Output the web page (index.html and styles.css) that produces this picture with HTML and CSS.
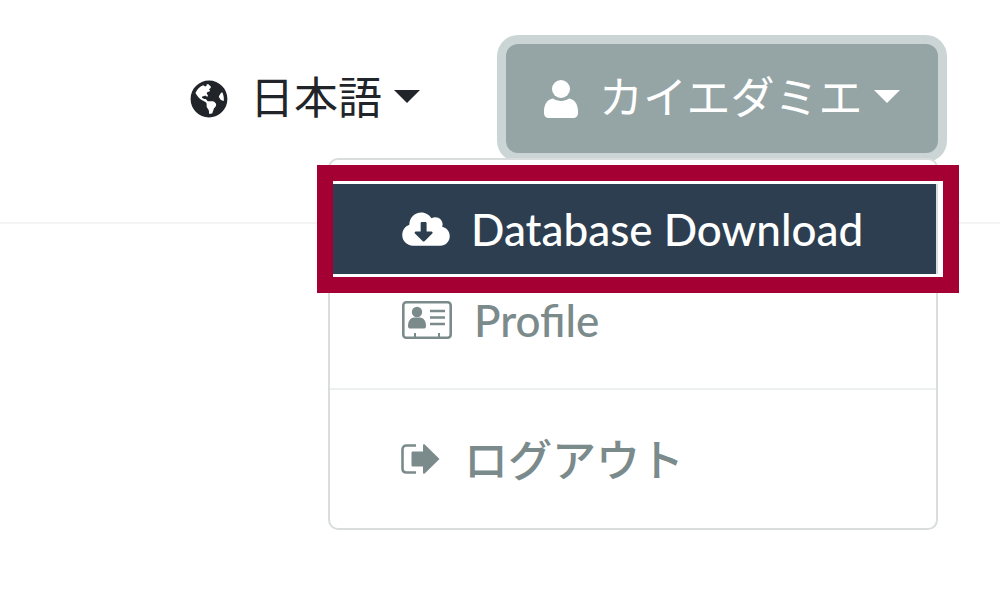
FILE: index.html
```html
<!DOCTYPE html>
<html lang="ja">
<head>
  <meta charset="UTF-8" />
  <title>Database Download</title>
  <link rel="stylesheet" href="styles.css">
</head>
<body>
  <header class="navbar">
    <a class="lang">
      <svg class="icon-globe" viewBox="0 0 496 512"><path d="M248 8C111.03 8 0 119.03 0 256s111.03 248 248 248 248-111.03 248-248S384.97 8 248 8zm82.29 357.6c-3.9 3.88-7.99 7.95-11.31 11.28-2.99 3-5.1 6.7-6.17 10.71-1.51 5.66-2.73 11.38-4.77 16.87l-17.39 46.85c-13.76 3-28 4.69-42.65 4.69v-27.38c1.69-12.62-7.64-36.26-22.63-51.25-6-6-9.37-14.14-9.37-22.63v-32.01c0-11.64-6.27-22.34-16.46-27.97-14.37-7.95-34.81-19.06-48.81-26.11-11.48-5.78-22.1-13.14-31.65-21.75l-.8-.72a114.792 114.792 0 0 1-18.06-20.74c-9.38-13.77-24.66-36.42-34.59-51.14 20.47-45.5 57.36-82.04 103.2-101.89l24.01 12.01C203.48 89.74 216 82.01 216 70.11v-11.3c7.99-1.29 16.12-2.11 24.39-2.42l28.3 28.3c6.25 6.25 6.25 16.38 0 22.63L264 112l-10.34 10.34c-3.12 3.12-3.12 8.19 0 11.31l4.69 4.69c3.12 3.12 3.12 8.19 0 11.31l-8 8a8.008 8.008 0 0 1-5.66 2.34h-8.99c-2.08 0-4.08.81-5.58 2.27l-9.92 9.65a8.008 8.008 0 0 0-1.58 9.31l15.59 31.19c2.66 5.32-1.21 11.58-7.15 11.58h-5.64c-1.93 0-3.79-.7-5.24-1.96l-9.28-8.06a16.017 16.017 0 0 0-15.55-3.1l-31.17 10.39a11.95 11.95 0 0 0-8.17 11.34c0 4.53 2.56 8.66 6.61 10.69l11.08 5.54c9.41 4.71 19.79 7.16 30.31 7.16s22.59 27.29 32 32h66.75c8.49 0 16.62 3.37 22.63 9.37l13.69 13.69a30.503 30.503 0 0 1 8.93 21.57 46.536 46.536 0 0 1-13.72 32.98zM417 274.25c-5.79-1.45-10.84-5-14.15-9.97l-17.98-26.97a23.97 23.97 0 0 1 0-26.62l19.59-29.38c2.32-3.47 5.5-6.28 9.24-8.14l12.98-6.49C440.2 193.59 448 223.87 448 256c0 8.67-.74 17.16-1.82 25.54L417 274.25z"/></svg>
      <span class="label">日本語</span>
      <i class="caret"></i>
    </a>
    <a class="user-btn">
      <svg class="icon-user" viewBox="0 0 34 38">
        <circle cx="17" cy="9" r="9"/>
        <path d="M0 31C0 24 4 19 9 18.500 11 20 14 21 17 21s6-1 8-2.500C30 19 34 24 34 31v2c0 3-2 5-5 5H5c-3 0-5-2-5-5z"/>
      </svg>
      <span class="label">カイエダミエ</span>
      <i class="caret"></i>
    </a>
  </header>

  <div class="menu">
    <a class="menu-item active">
      <svg class="icon-cloud" viewBox="0 0 640 512"><path d="M537.6 226.6c4.1-10.7 6.4-22.4 6.4-34.6 0-53-43-96-96-96-19.7 0-38.1 6-53.3 16.2C367 64.2 315.3 32 256 32c-88.4 0-160 71.6-160 160 0 2.7.1 5.4.2 8.1C40.2 219.8 0 273.2 0 336c0 79.5 64.5 144 144 144h368c70.7 0 128-57.3 128-128 0-61.9-44-113.6-102.4-125.4zm-132.9 88.7L299.3 420.7c-6.2 6.2-16.4 6.2-22.6 0L171.3 315.3c-10.1-10.1-2.9-27.3 11.3-27.3H248V176c0-8.8 7.2-16 16-16h48c8.8 0 16 7.2 16 16v112h65.4c14.2 0 21.4 17.2 11.3 27.3z"/></svg>
      <span class="text-en">Database Download</span>
    </a>
    <a class="menu-item profile">
      <svg class="icon-card" viewBox="0 0 50 38">
        <rect x="1.300" y="1.300" width="47.400" height="35.400" rx="3" fill="none" stroke="currentColor" stroke-width="2.600"/>
        <path d="M13 36v-4M37 36v-4" stroke="currentColor" stroke-width="2"/>
        <circle cx="15" cy="11" r="5.200"/>
        <path d="M6 25c0-5 2.600-8.500 6-8.500h6c3.400 0 6 3.500 6 8.500 0 1.500-.6 2.500-1.600 2.500H7.600C6.600 27.500 6 26.500 6 25z"/>
        <path d="M28 10h15M28 16.500h15M28 23h15" stroke="currentColor" stroke-width="2.600"/>
      </svg>
      <span class="text-en">Profile</span>
    </a>
    <div class="divider"></div>
    <a class="menu-item logout">
      <svg class="icon-logout" viewBox="0 0 39 30">
        <path d="M15 1.500H5.500C3 1.500 1.500 3 1.500 5.500v19c0 2.500 1.500 4 4 4H15" fill="none" stroke="currentColor" stroke-width="2.600"/>
        <path d="M12 7.500h10V1.500c0-1.200 1.200-1.600 2-.8L38.500 15 24 29.300c-.8.8-2 .4-2-.8v-6H12c-1 0-1.500-.5-1.500-1.500V9c0-1 .5-1.500 1.500-1.500z"/>
      </svg>
      <span class="logout-text">ログアウト</span>
    </a>
  </div>
</body>
</html>
```

FILE: styles.css
```css
:root {
  --dark: #2c3e50;
  --muted: #7b8a8b;
  --grey: #95a5a6;
  --red: #a50034;
}

* {
  box-sizing: border-box;
}

body {
  margin: 0;
  background: #fff;
  color: #212529;
  font-family: Lato, "Noto Sans CJK JP", sans-serif;
  font-size: 44px;
  overflow: hidden;
}

svg {
  fill: currentColor;
  flex: none;
}

.label {
  margin-bottom: 8px;
}

.text-en {
  font-weight: 500;
}

.navbar {
  display: flex;
  justify-content: flex-end;
  align-items: flex-start;
  height: 224px;
  padding: 44px 62px 0 0;
  border-bottom: 2px solid #f4f4f4;
  box-shadow: 0 3px 6px rgba(0, 0, 0, 0.03);
}

.lang {
  display: flex;
  align-items: center;
  height: 109px;
  margin-right: 86px;
}

.icon-globe {
  width: 38px;
  height: 38px;
  margin-right: 22px;
}

.caret {
  width: 0;
  height: 0;
  margin-bottom: 4px;
  border-top: 13px solid currentColor;
  border-left: 13px solid transparent;
  border-right: 13px solid transparent;
}

.lang .caret {
  margin-left: 12px;
}

.user-btn {
  display: flex;
  align-items: center;
  width: 432px;
  height: 109px;
  padding-left: 38px;
  background: var(--grey);
  color: #fff;
  border-radius: 12px;
  box-shadow: 0 0 0 9px #ccd5d6;
}

.icon-user {
  width: 34px;
  height: 38px;
  margin-right: 21px;
}

.user-btn .caret {
  margin-left: 11px;
}

.menu {
  position: absolute;
  top: 158px;
  left: 328px;
  width: 610px;
  height: 372px;
  padding: 26px 0 0 3px;
  background: #fff;
  border: 2px solid #d9dddd;
  border-radius: 10px;
  color: var(--muted);
}

.menu-item {
  display: flex;
  align-items: center;
  padding-left: 69px;
}

.menu-item.active {
  width: 610px;
  height: 96px;
  margin-top: -5px;
  border: solid #fff;
  border-width: 3px 5px 3px 0;
  background: var(--dark);
  background-clip: padding-box;
  box-shadow: inset -2px 0 0 #d9dddd;
  color: #fff;
  outline: 16px solid var(--red);
}

.icon-cloud {
  width: 48px;
  height: 38px;
  margin-right: 21px;
}

.menu-item.profile {
  height: 85px;
}

.icon-card {
  width: 50px;
  height: 38px;
  margin-right: 22px;
}

.divider {
  height: 2px;
  margin: 26px 0 0 -3px;
  background: #edf0f0;
}

.menu-item.logout {
  height: 138px;
  padding-left: 68px;
}

.icon-logout {
  width: 39px;
  height: 30px;
  margin-right: 24px;
}

.logout-text {
  margin-bottom: 2px;
  font-weight: 500;
}
```
